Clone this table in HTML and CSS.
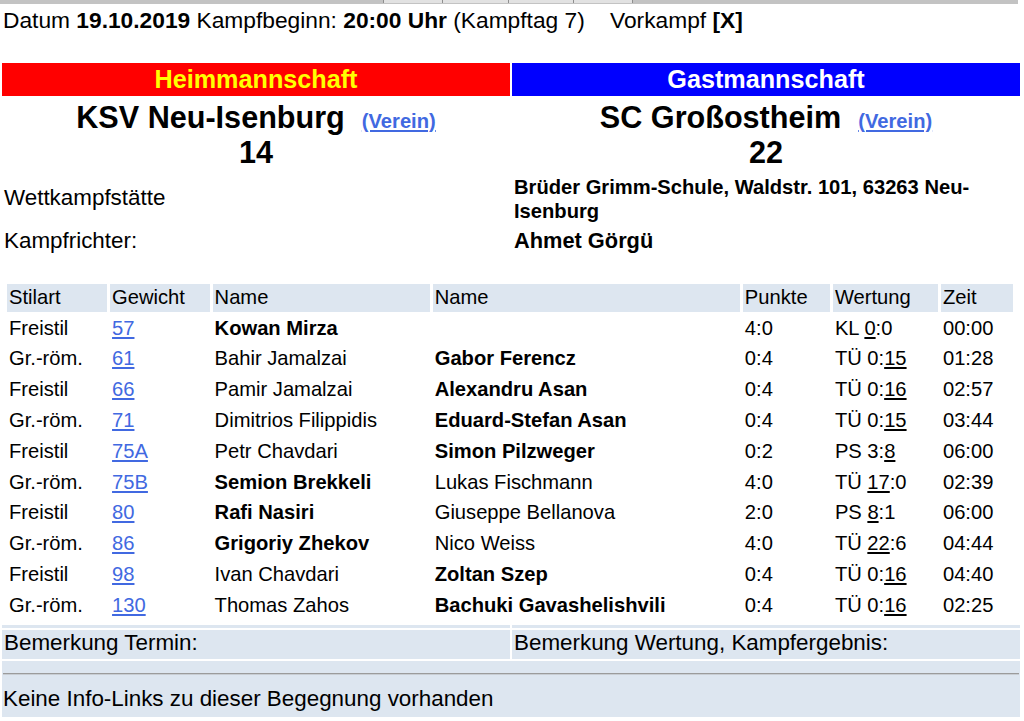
FILE: index.html
```html
<!DOCTYPE html>
<html lang="de">
<head>
<meta charset="utf-8">
<title>Begegnung</title>
<link rel="stylesheet" href="styles.css">
</head>
<body>
<div class="tabbar">
  <div class="tabs"><span class="tab t1"></span><span class="tab t2"></span><span class="tab t3"></span><span class="tab t4"></span></div>
</div>
<p class="meta">Datum <b>19.10.2019</b> Kampfbeginn: <b>20:00 Uhr</b> (Kampftag 7)&nbsp;&nbsp;&nbsp; Vorkampf <b>[X]</b></p>

<table class="teams">
  <tr>
    <th class="home">Heimmannschaft</th>
    <th class="guest">Gastmannschaft</th>
  </tr>
  <tr>
    <td class="team">KSV Neu-Isenburg&nbsp; <a href="#" class="club">(Verein)</a><br>14</td>
    <td class="team">SC Großostheim&nbsp; <a href="#" class="club">(Verein)</a><br>22</td>
  </tr>
  <tr>
    <td class="label venue-label">Wettkampfstätte</td>
    <td class="address">Brüder Grimm-Schule, Waldstr. 101, 63263 Neu-Isenburg</td>
  </tr>
  <tr>
    <td class="label ref">Kampfrichter:</td>
    <td class="ref referee">Ahmet Görgü</td>
  </tr>
</table>

<table class="bouts">
  <thead>
    <tr>
      <th class="c-style">Stilart</th>
      <th class="c-weight">Gewicht</th>
      <th class="c-home">Name</th>
      <th class="c-guest">Name</th>
      <th class="c-points">Punkte</th>
      <th class="c-score">Wertung</th>
      <th class="c-time">Zeit</th>
    </tr>
  </thead>
  <tbody>
    <tr><td>Freistil</td><td><a href="#">57</a></td><td><b>Kowan Mirza</b></td><td></td><td>4:0</td><td>KL <u>0</u>:0</td><td>00:00</td></tr>
    <tr><td>Gr.-röm.</td><td><a href="#">61</a></td><td>Bahir Jamalzai</td><td><b>Gabor Ferencz</b></td><td>0:4</td><td>TÜ 0:<u>15</u></td><td>01:28</td></tr>
    <tr><td>Freistil</td><td><a href="#">66</a></td><td>Pamir Jamalzai</td><td><b>Alexandru Asan</b></td><td>0:4</td><td>TÜ 0:<u>16</u></td><td>02:57</td></tr>
    <tr><td>Gr.-röm.</td><td><a href="#">71</a></td><td>Dimitrios Filippidis</td><td><b>Eduard-Stefan Asan</b></td><td>0:4</td><td>TÜ 0:<u>15</u></td><td>03:44</td></tr>
    <tr><td>Freistil</td><td><a href="#">75A</a></td><td>Petr Chavdari</td><td><b>Simon Pilzweger</b></td><td>0:2</td><td>PS 3:<u>8</u></td><td>06:00</td></tr>
    <tr><td>Gr.-röm.</td><td><a href="#">75B</a></td><td><b>Semion Brekkeli</b></td><td>Lukas Fischmann</td><td>4:0</td><td>TÜ <u>17</u>:0</td><td>02:39</td></tr>
    <tr><td>Freistil</td><td><a href="#">80</a></td><td><b>Rafi Nasiri</b></td><td>Giuseppe Bellanova</td><td>2:0</td><td>PS <u>8</u>:1</td><td>06:00</td></tr>
    <tr><td>Gr.-röm.</td><td><a href="#">86</a></td><td><b>Grigoriy Zhekov</b></td><td>Nico Weiss</td><td>4:0</td><td>TÜ <u>22</u>:6</td><td>04:44</td></tr>
    <tr><td>Freistil</td><td><a href="#">98</a></td><td>Ivan Chavdari</td><td><b>Zoltan Szep</b></td><td>0:4</td><td>TÜ 0:<u>16</u></td><td>04:40</td></tr>
    <tr><td>Gr.-röm.</td><td><a href="#">130</a></td><td>Thomas Zahos</td><td><b>Bachuki Gavashelishvili</b></td><td>0:4</td><td>TÜ 0:<u>16</u></td><td>02:25</td></tr>
  </tbody>
</table>

<table class="notes">
  <tr class="band"><td></td><td></td></tr>
  <tr class="remarks"><td>Bemerkung Termin:</td><td>Bemerkung Wertung, Kampfergebnis:</td></tr>
  <tr><td colspan="2" class="info"><hr>Keine Info-Links zu dieser Begegnung vorhanden</td></tr>
</table>
</body>
</html>
```

FILE: styles.css
```css
html, body {
  background: #ffffff;
}

body {
  margin: 0;
  font-family: "Liberation Sans", Arial, sans-serif;
  font-size: 22.4px;
  line-height: 25.76px;
  color: #000000;
}

a {
  color: #4169e1;
}

/* top tab strip (scrolled-off navigation) */
.tabbar {
  width: 1018px;
  height: 4px;
  background: #c3c3c3;
  display: flex;
}

.tabs {
  display: flex;
  margin-left: 383px;
  height: 3px;
}

.tab {
  display: block;
  height: 3px;
  background: #e2e2e2;
  border-left: 1px solid #8e8e8e;
}

.t1 { width: 58px; }
.t2 { width: 65px; }
.t3 { width: 64px; }
.t4 { width: 58px; border-right: 1px solid #8e8e8e; }

.meta {
  margin: 0;
  padding: 3.7px 0 0 3px;
  font-size: 22.75px;
  white-space: nowrap;
}

/* teams block */
.teams {
  margin-top: 27.5px;
  width: 1022px;
  border-collapse: separate;
  border-spacing: 2px;
  table-layout: fixed;
}

.teams th,
.teams td {
  width: 50%;
  padding: 1.4px 2px;
}

.teams th {
  font-size: 25.2px;
  line-height: 29px;
  font-weight: bold;
  text-align: center;
  padding: 2.5px 2px 1.5px;
}

.home {
  background: #ff0000;
  color: #ffff00;
}

.guest {
  background: #0000ff;
  color: #ffffff;
}

.team {
  text-align: center;
  font-size: 30.6px;
  line-height: 35px;
  font-weight: bold;
}

.teams .team {
  padding: 1.6px 2px 3.4px;
}

.club {
  font-size: 20.16px;
  line-height: 20px;
  font-weight: bold;
}

.label {
  vertical-align: middle;
}

.teams .venue-label {
  padding-bottom: 4.8px;
}

.address {
  font-size: 20.16px;
  line-height: 23.2px;
  font-weight: bold;
}

.teams .ref {
  padding-top: 2.2px;
}

.referee {
  font-weight: bold;
  font-size: 21.8px;
}

/* bouts */
.bouts {
  margin: 23.4px 0 0 4px;
  width: 1012px;
  border-collapse: separate;
  border-spacing: 3px;
  table-layout: fixed;
  font-size: 20.16px;
  line-height: 23.8px;
}

.bouts th,
.bouts td {
  box-sizing: border-box;
  padding: 2px 2px;
  height: 27.8px;
  text-align: left;
  vertical-align: middle;
  white-space: nowrap;
}

.bouts th {
  background: #dde6f0;
  font-weight: normal;
}

.c-style  { width: 100px; }
.c-weight { width: 99.5px; }
.c-home   { width: 217px; }
.c-guest  { width: 307px; }
.c-points { width: 87px; }
.c-score  { width: 105px; }
.c-time   { width: 72px; }

/* notes */
.notes {
  width: 1022px;
  border-collapse: separate;
  border-spacing: 2px;
  table-layout: fixed;
}

.notes td {
  background: #dde6f0;
  width: 50%;
}

.band td {
  height: 3px;
  padding: 0;
}

.remarks td {
  padding: 0.5px 2px 3.5px;
}

.notes .info {
  padding: 0 1px 5.5px;
}

.info hr {
  margin: 11.2px 0;
  height: 0;
  border: 0;
  border-top: 1px solid #9b9b9b;
  border-bottom: 1px solid #c8cdd3;
}
```
